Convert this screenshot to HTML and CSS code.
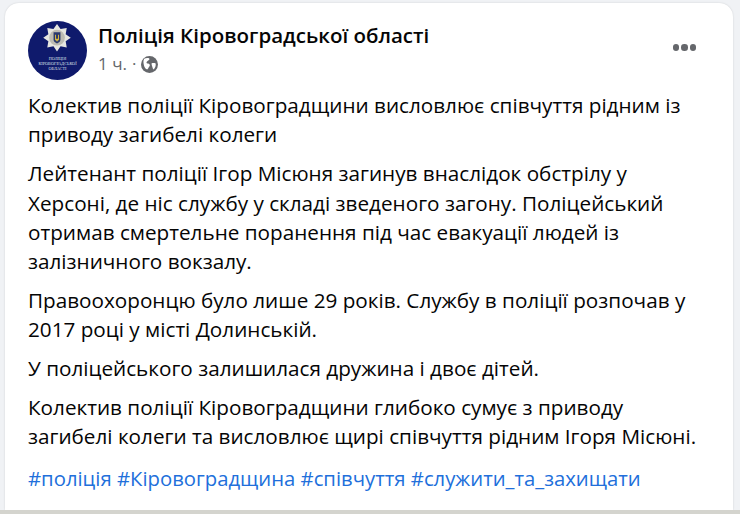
FILE: index.html
```html
<!DOCTYPE html>
<html lang="uk">
<head>
<meta charset="utf-8">
<title>Поліція Кіровоградської області</title>
<link rel="stylesheet" href="styles.css">
</head>
<body>
<article class="card">
  <header class="head">
    <svg class="avatar" viewBox="0 0 60 60" width="59" height="59">
      <circle cx="30" cy="30" r="30" fill="#0f1a6c"/>
      <polygon fill="#e6e6e0" points="29.500,3 33.100,8.200 39.400,7.100 38.300,13.400 43.500,17 38.300,20.600 39.400,26.900 33.100,25.800 29.500,31 25.900,25.800 19.600,26.900 20.700,20.600 15.500,17 20.700,13.400 19.600,7.100 25.900,8.200"/>
      <circle cx="29.500" cy="17" r="8" fill="#bdbcb2"/>
      <path fill="#2a3a6e" d="M26 11.500h7v7.500c0 2-1.800 3-3.500 3.800-1.700-.8-3.500-1.800-3.500-3.800z"/>
      <path fill="#d9b93e" d="M27.500 14h1v4h2v-4h1v5.500h-1.200v1.200h-1.600v-1.200h-1.200z"/>
      <text class="avatar-text" x="30" y="40">ПОЛІЦІЯ</text>
      <text class="avatar-text" x="30" y="45">КІРОВОГРАДСЬКОЇ</text>
      <text class="avatar-text" x="30" y="50">ОБЛАСТІ</text>
    </svg>
    <div class="meta">
      <h1 class="page">Поліція Кіровоградської області</h1>
      <div class="sub">
        <span>1 ч.</span><span class="dot">·</span>
        <svg class="globe" viewBox="0 0 16 16" width="17" height="17">
          <circle cx="8" cy="8" r="8" fill="#65676b"/>
          <path fill="#fff" d="M3 2.600c1.600-.9 3-.9 4.600-.5.5.8.3 1.500-.4 2-.9.2-1 1-1.700 1.300-.6.9-.3 1.300.5 1.600 1 .1 1.800.4 2.300 1.200.2 1-.4 1.600-1 2.300-.3.8-.8 1.700-1.500 2.200C3.700 11.800 3 10 2.700 8.400 2.200 6.300 2 4.300 3 2.600zM10 6.800c1-.1 2.300-.4 3.800.2.300 2-.3 4-1.800 5.600-.8-.2-1-1-1.200-1.900-.2-1.200-1-2-.8-3.900z"/>
        </svg>
      </div>
    </div>
    <div class="more" aria-label="Дії"><i></i><i></i><i></i></div>
  </header>
  <div class="body">
    <p>Колектив поліції Кіровоградщини висловлює співчуття рідним із приводу загибелі колеги</p>
    <p>Лейтенант поліції Ігор Місюня загинув внаслідок обстрілу у Херсоні, де ніс службу у складі зведеного загону. Поліцейський отримав смертельне поранення під час евакуації людей із залізничного вокзалу.</p>
    <p>Правоохоронцю було лише 29 років. Службу в поліції розпочав у 2017 році у місті Долинській.</p>
    <p>У поліцейського залишилася дружина і двоє дітей.</p>
    <p>Колектив поліції Кіровоградщини глибоко сумує з приводу загибелі колеги та висловлює щирі співчуття рідним Ігоря Місюні.</p>
    <p class="tags"><a>#поліція</a> <a>#Кіровоградщина</a> <a>#співчуття</a> <a>#служити_та_захищати</a></p>
  </div>
</article>
</body>
</html>
```
FILE: styles.css
```css
* { box-sizing: border-box; }
html, body { margin: 0; height: 514px; overflow: hidden; }
body {
  background: #f0f2f5;
  padding: 3px 7px 0 5px;
  font-family: "Open Sans", "Noto Sans", sans-serif;
  color: #050505;
  border-bottom: 4px solid #d4d4ce;
}
.card {
  background: #fff;
  border-radius: 14px 14px 0 0;
  height: 507px;
  padding: 18px 28px 0 23px;
  box-shadow: 0 0 2px rgba(0,0,0,.15);
}
.head { display: flex; align-items: flex-start; margin-right: -28px; }
.avatar { flex: none; }
.avatar-text { font-family: "Liberation Serif", serif; font-size: 4.300px; fill: #dfe1ea; text-anchor: middle; }
.meta { margin: 1px 0 0 11px; flex: 1; }
.page { margin: 0; font-size: 20.500px; line-height: 26px; font-weight: 600; }
.sub { display: flex; align-items: center; gap: 5px; margin-top: 5px; font-size: 17px; line-height: 22px; color: #65676b; }
.more { display: flex; gap: 2px; margin: 23px 37px 0 0; }
.more i { width: 6.500px; height: 6.500px; border-radius: 50%; background: #65676b; }
.body { margin-top: 11px; font-size: 20.700px; line-height: 29.350px; }
.body p { margin: 0 0 9.500px; }
.body .tags { font-size: 20.300px; margin-top: 12px; }
.tags a { color: #216fdb; }
```
